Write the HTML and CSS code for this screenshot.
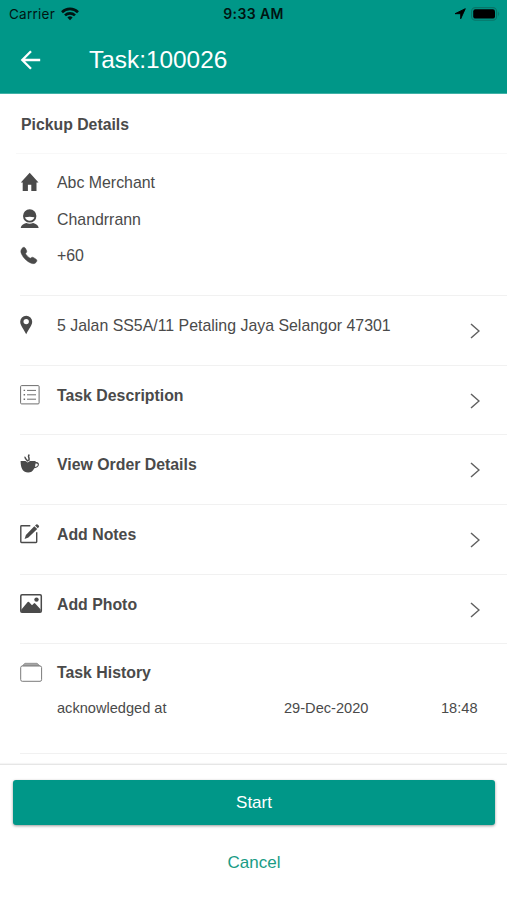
FILE: index.html
```html
<!DOCTYPE html>
<html lang="en">
<head>
    <meta charset="UTF-8">
    <meta name="viewport" content="width=device-width, initial-scale=1.0">
    <title>Task:100026</title>
    <link rel="stylesheet" href="styles.css">
</head>
<body>
<header>
    <div class="status-bar">
        <div class="carrier">
            <span>Carrier</span>
            <svg width="18" height="14" viewBox="0 0 18 14" fill="none" stroke="#001512" stroke-width="2.6">
                <path d="M1 5.2a11.4 11.4 0 0 1 16 0"/>
                <path d="M4 8.4a7.2 7.2 0 0 1 10 0"/>
                <path d="M9 13.2l-2.6-2.7a3.7 3.7 0 0 1 5.2 0z" fill="#001512" stroke="none"/>
            </svg>
        </div>
        <div class="clock">9:33 AM</div>
        <div class="indicators">
            <svg width="12" height="12" viewBox="0 0 12 12"><path d="M11.3.7L6.7 10.8V5.7H1z" fill="#000" stroke="#000" stroke-width=".9" stroke-linejoin="round"/></svg>
            <svg width="30" height="14" viewBox="0 0 30 14">
                <rect x=".6" y=".6" width="25" height="12.6" rx="3.8" fill="none" stroke="#087568" stroke-width="1.1"/>
                <rect x="2.2" y="2.2" width="21.8" height="9.4" rx="2.2" fill="#000"/>
                <path d="M27.2 4.6q2 2.3 0 4.6z" fill="#087568"/>
            </svg>
        </div>
    </div>
    <div class="toolbar">
        <svg width="22" height="20" viewBox="0 0 22 20" fill="none" stroke="#fff" stroke-width="2.3">
            <path d="M20.2 10H2.500M11 1.300L2.300 10l8.700 8.700"/>
        </svg>
        <h1>Task:100026</h1>
    </div>
</header>

<main>
    <h2>Pickup Details</h2>

    <ul class="contact">
        <li>
            <svg class="icon" width="24" height="20" viewBox="0 0 24 20" fill="#4a4a4a">
                <path d="M9.7.8L.8 10.4h1.9V19h5.200v-6.300h3.400V19h5.200v-8.600h2z"/>
            </svg>
            <span>Abc Merchant</span>
        </li>
        <li>
            <svg class="icon" width="24" height="20" viewBox="0 0 24 20" fill="#4a4a4a">
                <path d="M9.700.2a6.700 6.700 0 1 1 0 13.400 6.700 6.700 0 0 1 0-13.400zM5 8.300c.6 2 2.500 3.500 4.700 3.500s4.100-1.500 4.700-3.500q-2.700-.6-4.700-.6T5 8.300z" fill-rule="evenodd"/>
                <path d="M.7 19c.5-3 2.700-3.700 5.600-4.900q3.400 1.400 6.800 0c2.900 1.200 5.100 1.900 5.600 4.900z"/>
            </svg>
            <span>Chandrrann</span>
        </li>
        <li>
            <svg class="icon" width="24" height="20" viewBox="0 0 24 20" fill="#4a4a4a" stroke="#4a4a4a" stroke-width=".5">
                <path d="M2.100 2.300C3.200.9 4.600 1 5.400 2.200l1.200 2.400c.5 1.200-.2 2-1 2.700-.3 1 3.600 5 4.900 4.900 1-.9 1.800-1.300 2.900-.7l2.700 1.700c1.300.9.9 2.200-.1 3.200-1.200 1.300-2.900 1.600-4.900.8C6.800 15.500 2.700 11.600 1.100 6.900.5 5 1 3.600 2.100 2.300z"/>
            </svg>
            <span>+60</span>
        </li>
    </ul>

    <div class="row address">
        <svg class="icon" width="24" height="20" viewBox="0 0 24 20" fill="#4a4a4a">
            <path d="M6.200.800a6 6 0 0 1 6 6c0 3.700-3.700 7.600-6 12.400C3.800 14.400.2 10.500.2 6.800a6 6 0 0 1 6-6zm0 3.100a2.700 2.700 0 1 0 0 5.400 2.700 2.700 0 0 0 0-5.400z" fill-rule="evenodd"/>
        </svg>
        <span>5 Jalan SS5A/11 Petaling Jaya Selangor 47301</span>
        <svg class="chevron" width="10" height="16" viewBox="0 0 10 16"><path d="M1 1l8 7-8 7"/></svg>
    </div>

    <div class="row">
        <svg class="icon" width="24" height="20" viewBox="0 0 24 20" fill="none" stroke="#6e6e6e">
            <rect x=".6" y=".6" width="18.500" height="18.300" rx="1"/>
            <path d="M7 5.400h9M7 9.800h9M7 14.200h9"/>
            <path d="M3.600 5.400h1.500M3.600 9.800h1.500M3.600 14.200h1.500" stroke-width="1.400"/>
        </svg>
        <span>Task Description</span>
        <svg class="chevron" width="10" height="16" viewBox="0 0 10 16"><path d="M1 1l8 7-8 7"/></svg>
    </div>

    <div class="row">
        <svg class="icon" width="24" height="20" viewBox="0 0 24 20" fill="#4a4a4a">
            <path d="M.6 7h4.800l2.300 1.500L10 7h5.600v1.100c4.600-.9 4.800 5.700-1.300 6.100-.7 1.600-1.700 2.800-2.800 3.600-1.700 1-5 1-6.700 0C1.900 16.300.6 12 .6 7zm14.900 2.500c-.1 1.200-.3 2.300-.6 3.300 3.700-.3 3.900-4.100.6-3.300z" fill-rule="evenodd"/>
            <path d="M9.400.6c-2.600 1.900 1.100 3-.9 6.300M5.400 2.900c-1.300 1.300 1.500 2.300 2.300 4.500" fill="none" stroke="#4a4a4a" stroke-width="1.500"/>
        </svg>
        <span>View Order Details</span>
        <svg class="chevron" width="10" height="16" viewBox="0 0 10 16"><path d="M1 1l8 7-8 7"/></svg>
    </div>

    <div class="row">
        <svg class="icon" width="24" height="20" viewBox="0 0 24 20">
            <path d="M10.300 1.800H1.500Q.8 1.800.8 2.500v15.300q0 .7.700.7h14.500q.7 0 .7-.7V8.300" fill="none" stroke="#4a4a4a" stroke-width="1.400"/>
            <path d="M14.300 2.200l2.900 2.700-8.800 8.600-3.800 1.500 1.300-4zM15 1.500L16.300.4q.7-.4 1.300.1l1.300 1.300q.5.6 0 1.200L17.800 4.200z" fill="#4a4a4a"/>
        </svg>
        <span>Add Notes</span>
        <svg class="chevron" width="10" height="16" viewBox="0 0 10 16"><path d="M1 1l8 7-8 7"/></svg>
    </div>

    <div class="row">
        <svg class="icon" width="24" height="20" viewBox="0 0 24 20">
            <rect x=".8" y=".8" width="20.500" height="17.400" rx="1.200" fill="none" stroke="#4a4a4a" stroke-width="1.500"/>
            <path d="M1.200 15.800l6.500-7.800q.7-.6 1.300 0l3 3.300 1.800-1.900q.7-.6 1.400 0l5.500 6.100V18H1.200z" fill="#4a4a4a"/>
            <circle cx="16.500" cy="5.600" r="2.200" fill="#4a4a4a"/>
        </svg>
        <span>Add Photo</span>
        <svg class="chevron" width="10" height="16" viewBox="0 0 10 16"><path d="M1 1l8 7-8 7"/></svg>
    </div>

    <div class="history">
        <div class="history-title">
            <svg class="icon" width="24" height="20" viewBox="0 0 24 20">
                <path d="M2.500 3.600L5 1.300h12l2.600 2.300z" fill="#a5a5a5" stroke="#8a8a8a" stroke-width=".8"/>
                <rect x=".7" y="4" width="20.900" height="15.300" rx="1.600" fill="#fff" stroke="#7b7b7b"/>
            </svg>
            <span>Task History</span>
        </div>
        <div class="history-entry">
            <span>acknowledged at</span>
            <span>29-Dec-2020</span>
            <span>18:48</span>
        </div>
    </div>
</main>

<footer>
    <button type="button" class="start">Start</button>
    <button type="button" class="cancel">Cancel</button>
</footer>
</body>
</html>
```
FILE: styles.css
```css
* {
    box-sizing: border-box;
}

body {
    display: flex;
    flex-direction: column;
    height: 900px;
    margin: 0;
    overflow: hidden;
    background-color: #fff;
    color: #4a4a4a;
    font-family: "Liberation Sans", Arial, sans-serif;
    font-size: 15.9px;
}

header {
    height: 94px;
    background-color: #009788;
    border-bottom: 1px solid #40b1a6;
}

.status-bar {
    display: grid;
    grid-template-columns: 1fr auto 1fr;
    align-items: center;
    height: 27px;
    color: #001512;
    font-family: Inter, sans-serif;
    font-size: 13.5px;
}

.carrier {
    display: flex;
    align-items: center;
    gap: 6px;
    padding-left: 9px;
    letter-spacing: 0.25px;
}

.clock {
    font-weight: 600;
    font-size: 14px;
    letter-spacing: 0.4px;
}

.indicators {
    display: flex;
    align-items: center;
    justify-content: flex-end;
    gap: 5px;
    padding-right: 6px;
}

.toolbar {
    display: flex;
    align-items: center;
    height: 66px;
    padding-left: 20px;
}

h1 {
    margin: 0 0 0 47px;
    color: #fff;
    font-size: 24.4px;
    font-weight: normal;
}

main {
    flex: 1;
}

h2 {
    height: 60px;
    margin: 0 0 0 16px;
    padding-left: 5px;
    border-bottom: 1px solid #f8f8f8;
    font-size: 15.8px;
    line-height: 62px;
}

.contact {
    height: 142px;
    margin: 0 0 0 20px;
    padding: 10px 0 0;
    border-bottom: 1px solid #f1f1f1;
    list-style: none;
}

.contact li {
    display: flex;
    align-items: center;
    height: 36.7px;
}

.contact span {
    padding-top: 1px;
}

.icon {
    flex: none;
    margin-right: 13px;
}

.row {
    display: flex;
    align-items: flex-start;
    height: 69.7px;
    margin-left: 20px;
    padding: 19px 27px 0 0;
    border-bottom: 1px solid #f1f1f1;
    font-size: 15.85px;
    font-weight: bold;
    line-height: 21px;
}

.address {
    font-size: 15.9px;
    font-weight: normal;
}

.chevron {
    margin: 8px 0 0 auto;
    fill: none;
    stroke: #606060;
    stroke-width: 1.5;
}

.history {
    height: 109.5px;
    margin-left: 20px;
    padding-top: 18px;
    border-bottom: 1px solid #f1f1f1;
}

.history-title {
    display: flex;
    font-size: 15.85px;
    font-weight: bold;
    line-height: 21px;
}

.history-entry {
    display: grid;
    grid-template-columns: 227px 157px auto;
    padding: 16px 0 0 37px;
    font-size: 14.6px;
    line-height: 18px;
}

footer {
    display: flex;
    flex-direction: column;
    align-items: center;
    height: 136px;
    padding: 15px 12px 0 13px;
    border-top: 1px solid #e6e6e6;
    box-shadow: 0 -1px 1px #f5f5f5;
}

button {
    border: none;
    font-family: inherit;
    font-size: 17px;
    cursor: pointer;
}

.start {
    width: 100%;
    height: 45px;
    border-radius: 3px;
    background-color: #009788;
    box-shadow: 0 1px 3px rgba(0, 0, 0, 0.4);
    color: #fff;
}

.cancel {
    height: 40px;
    margin-top: 18px;
    background: none;
    color: #199c85;
}
```
